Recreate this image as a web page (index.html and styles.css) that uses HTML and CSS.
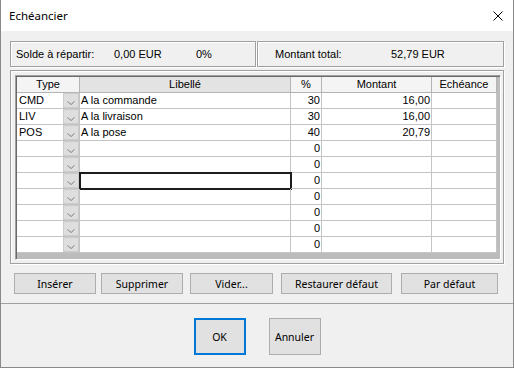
FILE: index.html
```html
<!DOCTYPE html>
<html lang="fr">
<head>
<meta charset="utf-8">
<title>Echéancier</title>
<link rel="stylesheet" href="styles.css">
</head>
<body>
<div class="window">
  <div class="titlebar">
    <span class="title">Echéancier</span>
    <svg class="close" width="10" height="10" viewBox="0 0 10 10"><path d="M0.5 0.5 L9.5 9.5 M9.5 0.5 L0.5 9.5" stroke="#000" stroke-width="1" fill="none"/></svg>
  </div>
  <div class="body">
    <div class="info">
      <div class="panel panel-left">
        <span class="lbl-solde">Solde à répartir:</span>
        <span class="val-solde">0,00 EUR</span>
        <span>0%</span>
      </div>
      <div class="panel panel-right">
        <span class="lbl-total">Montant total:</span>
        <span>52,79 EUR</span>
      </div>
    </div>
    <div class="frame">
      <div class="grid">
        <div class="row head">
          <div class="c h-type">Type</div>
          <div class="c active">Libellé</div>
          <div class="c">%</div>
          <div class="c">Montant</div>
          <div class="c">Echéance</div>
        </div>
        <div class="row">
          <div class="c c-type">CMD</div>
          <div class="c c-dd"><span class="dd"><svg width="8" height="4" viewBox="0 0 8 4"><polyline points="0.5,0.5 4,3.5 7.5,0.5" fill="none" stroke="#808080" stroke-width="1"/></svg></span></div>
          <div class="c c-lib">A la commande</div>
          <div class="c c-num">30</div>
          <div class="c c-num">16,00</div>
          <div class="c"></div>
        </div>
        <div class="row">
          <div class="c c-type">LIV</div>
          <div class="c c-dd"><span class="dd"><svg width="8" height="4" viewBox="0 0 8 4"><polyline points="0.5,0.5 4,3.5 7.5,0.5" fill="none" stroke="#808080" stroke-width="1"/></svg></span></div>
          <div class="c c-lib">A la livraison</div>
          <div class="c c-num">30</div>
          <div class="c c-num">16,00</div>
          <div class="c"></div>
        </div>
        <div class="row">
          <div class="c c-type">POS</div>
          <div class="c c-dd"><span class="dd"><svg width="8" height="4" viewBox="0 0 8 4"><polyline points="0.5,0.5 4,3.5 7.5,0.5" fill="none" stroke="#808080" stroke-width="1"/></svg></span></div>
          <div class="c c-lib">A la pose</div>
          <div class="c c-num">40</div>
          <div class="c c-num">20,79</div>
          <div class="c"></div>
        </div>
        <div class="row">
          <div class="c c-type"></div>
          <div class="c c-dd"><span class="dd"><svg width="8" height="4" viewBox="0 0 8 4"><polyline points="0.5,0.5 4,3.5 7.5,0.5" fill="none" stroke="#808080" stroke-width="1"/></svg></span></div>
          <div class="c c-lib"></div>
          <div class="c c-num">0</div>
          <div class="c c-num"></div>
          <div class="c"></div>
        </div>
        <div class="row">
          <div class="c c-type"></div>
          <div class="c c-dd"><span class="dd"><svg width="8" height="4" viewBox="0 0 8 4"><polyline points="0.5,0.5 4,3.5 7.5,0.5" fill="none" stroke="#808080" stroke-width="1"/></svg></span></div>
          <div class="c c-lib"></div>
          <div class="c c-num">0</div>
          <div class="c c-num"></div>
          <div class="c"></div>
        </div>
        <div class="row">
          <div class="c c-type"></div>
          <div class="c c-dd"><span class="dd"><svg width="8" height="4" viewBox="0 0 8 4"><polyline points="0.5,0.5 4,3.5 7.5,0.5" fill="none" stroke="#808080" stroke-width="1"/></svg></span></div>
          <div class="c c-lib focus"></div>
          <div class="c c-num">0</div>
          <div class="c c-num"></div>
          <div class="c"></div>
        </div>
        <div class="row">
          <div class="c c-type"></div>
          <div class="c c-dd"><span class="dd"><svg width="8" height="4" viewBox="0 0 8 4"><polyline points="0.5,0.5 4,3.5 7.5,0.5" fill="none" stroke="#808080" stroke-width="1"/></svg></span></div>
          <div class="c c-lib"></div>
          <div class="c c-num">0</div>
          <div class="c c-num"></div>
          <div class="c"></div>
        </div>
        <div class="row">
          <div class="c c-type"></div>
          <div class="c c-dd"><span class="dd"><svg width="8" height="4" viewBox="0 0 8 4"><polyline points="0.5,0.5 4,3.5 7.5,0.5" fill="none" stroke="#808080" stroke-width="1"/></svg></span></div>
          <div class="c c-lib"></div>
          <div class="c c-num">0</div>
          <div class="c c-num"></div>
          <div class="c"></div>
        </div>
        <div class="row">
          <div class="c c-type"></div>
          <div class="c c-dd"><span class="dd"><svg width="8" height="4" viewBox="0 0 8 4"><polyline points="0.5,0.5 4,3.5 7.5,0.5" fill="none" stroke="#808080" stroke-width="1"/></svg></span></div>
          <div class="c c-lib"></div>
          <div class="c c-num">0</div>
          <div class="c c-num"></div>
          <div class="c"></div>
        </div>
        <div class="row">
          <div class="c c-type"></div>
          <div class="c c-dd"><span class="dd"><svg width="8" height="4" viewBox="0 0 8 4"><polyline points="0.5,0.5 4,3.5 7.5,0.5" fill="none" stroke="#808080" stroke-width="1"/></svg></span></div>
          <div class="c c-lib"></div>
          <div class="c c-num">0</div>
          <div class="c c-num"></div>
          <div class="c"></div>
        </div>
      </div>
    </div>
    <div class="actions">
      <button class="btn w-ins">Insérer</button>
      <button class="btn w-sup">Supprimer</button>
      <button class="btn w-vid">Vider...</button>
      <button class="btn w-res">Restaurer défaut</button>
      <button class="btn w-par">Par défaut</button>
    </div>
  </div>
  <div class="footer">
    <button class="btn btn-lg btn-ok">OK</button>
    <button class="btn btn-lg">Annuler</button>
  </div>
</div>
</body>
</html>
```
FILE: styles.css
```css
body {
  margin: 0;
}

.window {
  width: 514px;
  height: 368px;
  box-sizing: border-box;
  border: 1px solid #8a8a8a;
  border-top: none;
  background: #f0f0f0;
  display: flex;
  flex-direction: column;
  font-family: "Liberation Sans", Arial, sans-serif;
  font-size: 11px;
  color: #000;
}

.titlebar {
  height: 31px;
  flex: none;
  background: #fff;
  display: flex;
  align-items: center;
  padding-left: 8px;
}

.title {
  font-family: "Noto Sans", "Liberation Sans", sans-serif;
  font-size: 11.5px;
  color: #000;
}

.close {
  margin-left: auto;
  margin-right: 10px;
}

.body {
  flex: none;
  padding: 10px 0 9px 9px;
}

.info {
  display: flex;
  height: 26px;
}

.panel {
  box-sizing: border-box;
  height: 26px;
  border: 1px solid #a0a0a0;
  box-shadow: inset 1px 1px 0 #fff, 1px 1px 0 #fff;
  display: flex;
  align-items: center;
  white-space: nowrap;
}

.panel-left {
  width: 246px;
  padding-left: 5px;
}

.panel-right {
  width: 247px;
  margin-left: 1px;
  padding-left: 17px;
}

.lbl-solde {
  width: 98px;
}

.val-solde {
  width: 82px;
}

.lbl-total {
  width: 116px;
}

.frame {
  margin-top: 3px;
  width: 494px;
  box-sizing: border-box;
  border: 1px solid #a0a0a0;
  box-shadow: inset 1px 1px 0 #fff, 1px 1px 0 #fff;
  padding: 4px 2px 3px 4px;
}

.grid {
  width: 486px;
  box-sizing: border-box;
  border: 1px solid #a0a0a0;
  border-right-color: #fff;
  border-bottom-color: #fff;
  box-shadow: inset 1px 1px 0 #696969;
  padding: 1px 3px 6px 1px;
  background: #bcbcbc;
}

.row {
  display: grid;
  grid-template-columns: 46px 17px 211px 31px 110px 65px;
  height: 16px;
  background: #fff;
}

.c {
  box-sizing: border-box;
  height: 16px;
  border-right: 1px solid #c4c4c4;
  border-bottom: 1px solid #c4c4c4;
  line-height: 15px;
  white-space: nowrap;
  overflow: hidden;
}

.head .c {
  background: #f4f4f4;
  border-color: #b4b4b4;
  text-align: center;
}

.head .active {
  background: #e3e3e3;
}

.h-type {
  grid-column: span 2;
}

.c-type {
  border-right: none;
  padding-left: 2px;
}

.c-dd {
  display: flex;
}

.dd {
  width: 16px;
  height: 15px;
  box-sizing: border-box;
  background: #dedede;
  border: 1px solid #cbcbcb;
  display: flex;
  justify-content: center;
  align-items: flex-start;
  padding-top: 7px;
}

.dd svg {
  display: block;
}

.c-lib {
  padding-left: 1px;
}

.c-num {
  text-align: right;
  padding-right: 1px;
}

.focus {
  overflow: visible;
  outline: 2px solid #1c1c1c;
  outline-offset: -1px;
}

.actions {
  display: flex;
  margin-top: 9px;
  padding-left: 4px;
  height: 21px;
}

.btn {
  box-sizing: border-box;
  height: 21px;
  margin: 0;
  padding: 0;
  border: 1px solid #adadad;
  background: #e1e1e1;
  font-family: "Noto Sans", "Liberation Sans", sans-serif;
  font-size: 10.5px;
  color: #000;
  display: flex;
  align-items: center;
  justify-content: center;
  white-space: nowrap;
}

.w-ins {
  width: 82px;
}

.w-sup {
  width: 82px;
  margin-left: 5px;
}

.w-vid {
  width: 83px;
  margin-left: 7px;
}

.w-res {
  width: 111px;
  margin-left: 8px;
}

.w-par {
  width: 97px;
  margin-left: 9px;
}

.footer {
  flex: 1;
  border-top: 1px solid #a0a0a0;
  display: flex;
  justify-content: center;
  align-items: flex-start;
  gap: 23px;
  padding-top: 14px;
}

.btn-lg {
  width: 52px;
  height: 37px;
}

.btn-ok {
  border: 2px solid #0078d7;
}
```
